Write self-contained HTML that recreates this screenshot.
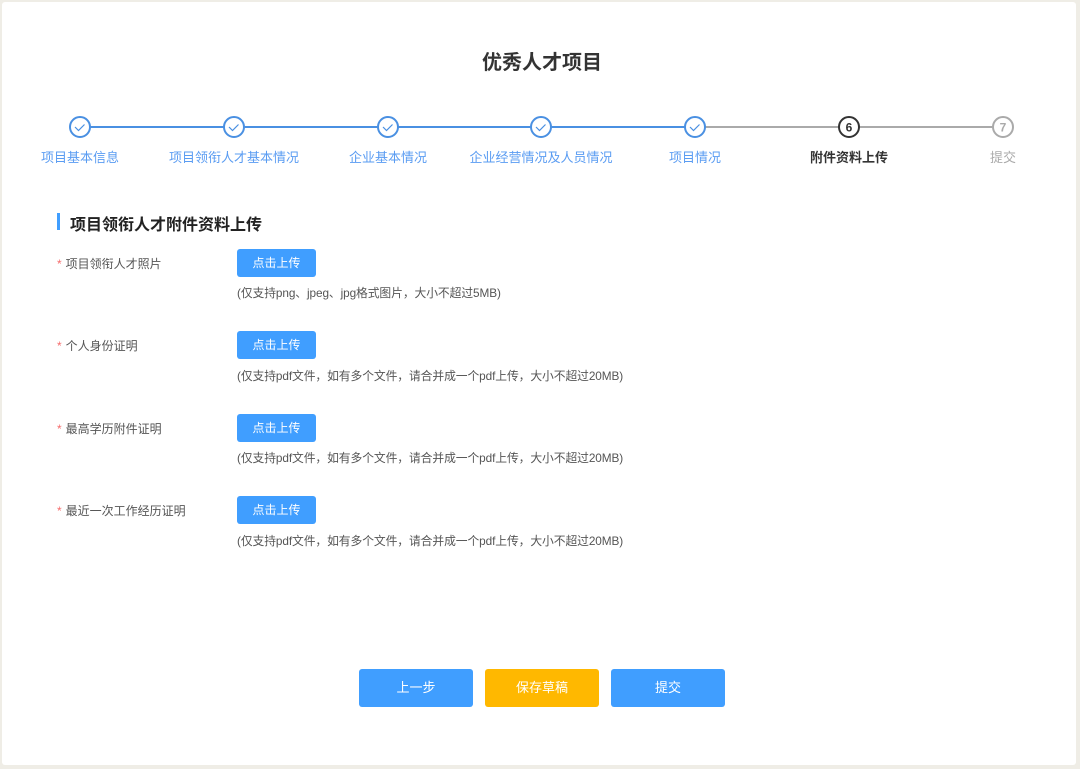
<!DOCTYPE html>
<html><head><meta charset="utf-8"><style>
body{margin:0;width:1080px;height:769px;background:#efede6;font-family:"Liberation Sans","Noto Sans CJK SC",sans-serif;position:relative;overflow:hidden}
.card{position:absolute;left:2px;top:2px;width:1074px;height:763px;background:#fff;border-radius:3px}
.a{position:absolute}
.title{left:0;width:1084px;top:46px;text-align:center;font-size:20px;font-weight:bold;color:#333}
.line{height:2px;top:126px}
.lb{top:147px;font-size:13px;width:200px;text-align:center;color:#5a9cf2}
.lab{left:57px;font-size:12px;color:#555}
.lab b{color:#f56c6c;font-weight:normal;margin-right:4px}
.btn{left:237px;width:79px;height:28px;background:#409eff;color:#fff;border-radius:3px;font-size:12px;text-align:center;line-height:28px}
.hint{left:237px;font-size:11.8px;color:#555;letter-spacing:-0.1px}
.bb{top:669px;width:114px;height:38px;border-radius:3px;color:#fff;font-size:13px;text-align:center;line-height:38px;background:#409eff}
</style></head><body>
<div class="card"></div>
<div class="a title">优秀人才项目</div>
<div class="a line" style="left:80px;width:615px;background:#4a90e2"></div>
<div class="a line" style="left:695px;width:308px;background:#aaa"></div>
<svg class="a" style="left:0;top:0" width="1080" height="140">
<g fill="#fff" stroke="#4a90e2" stroke-width="2">
<circle cx="80" cy="127" r="10"/><circle cx="234" cy="127" r="10"/><circle cx="388" cy="127" r="10"/><circle cx="541" cy="127" r="10"/><circle cx="695" cy="127" r="10"/></g>
<g fill="none" stroke="#4a90e2" stroke-width="1.2">
<path d="M75 127l3.5 3.5 6-6"/><path d="M229 127l3.5 3.5 6-6"/><path d="M383 127l3.5 3.5 6-6"/><path d="M536 127l3.5 3.5 6-6"/><path d="M690 127l3.5 3.5 6-6"/></g>
<circle cx="849" cy="127" r="10" fill="#fff" stroke="#333" stroke-width="2"/>
<circle cx="1003" cy="127" r="10" fill="#fff" stroke="#aaa" stroke-width="2"/>
<text x="849" y="131.5" font-size="12" font-weight="bold" text-anchor="middle" fill="#333" font-family="Liberation Sans">6</text>
<text x="1003" y="131.5" font-size="12" font-weight="bold" text-anchor="middle" fill="#aaa" font-family="Liberation Sans">7</text>
</svg>
<div class="a lb" style="left:-20px">项目基本信息</div>
<div class="a lb" style="left:134px">项目领衔人才基本情况</div>
<div class="a lb" style="left:288px">企业基本情况</div>
<div class="a lb" style="left:441px">企业经营情况及人员情况</div>
<div class="a lb" style="left:595px">项目情况</div>
<div class="a lb" style="left:749px;color:#333;font-weight:bold">附件资料上传</div>
<div class="a lb" style="left:903px;color:#aaa">提交</div>
<div class="a" style="left:57px;top:213px;width:3px;height:17px;background:#409eff"></div>
<div class="a" style="left:70px;top:211px;font-size:16px;font-weight:bold;color:#222">项目领衔人才附件资料上传</div>
<div class="a lab" style="top:255px"><b>*</b>项目领衔人才照片</div>
<div class="a btn" style="top:249px">点击上传</div>
<div class="a hint" style="top:284px">(仅支持png、jpeg、jpg格式图片，大小不超过5MB)</div>
<div class="a lab" style="top:337px"><b>*</b>个人身份证明</div>
<div class="a btn" style="top:331px">点击上传</div>
<div class="a hint" style="top:367px">(仅支持pdf文件，如有多个文件，请合并成一个pdf上传，大小不超过20MB)</div>
<div class="a lab" style="top:420px"><b>*</b>最高学历附件证明</div>
<div class="a btn" style="top:414px">点击上传</div>
<div class="a hint" style="top:449px">(仅支持pdf文件，如有多个文件，请合并成一个pdf上传，大小不超过20MB)</div>
<div class="a lab" style="top:502px"><b>*</b>最近一次工作经历证明</div>
<div class="a btn" style="top:496px">点击上传</div>
<div class="a hint" style="top:532px">(仅支持pdf文件，如有多个文件，请合并成一个pdf上传，大小不超过20MB)</div>
<div class="a bb" style="left:359px">上一步</div>
<div class="a bb" style="left:485px;background:#ffb800">保存草稿</div>
<div class="a bb" style="left:611px">提交</div>
</body></html>
